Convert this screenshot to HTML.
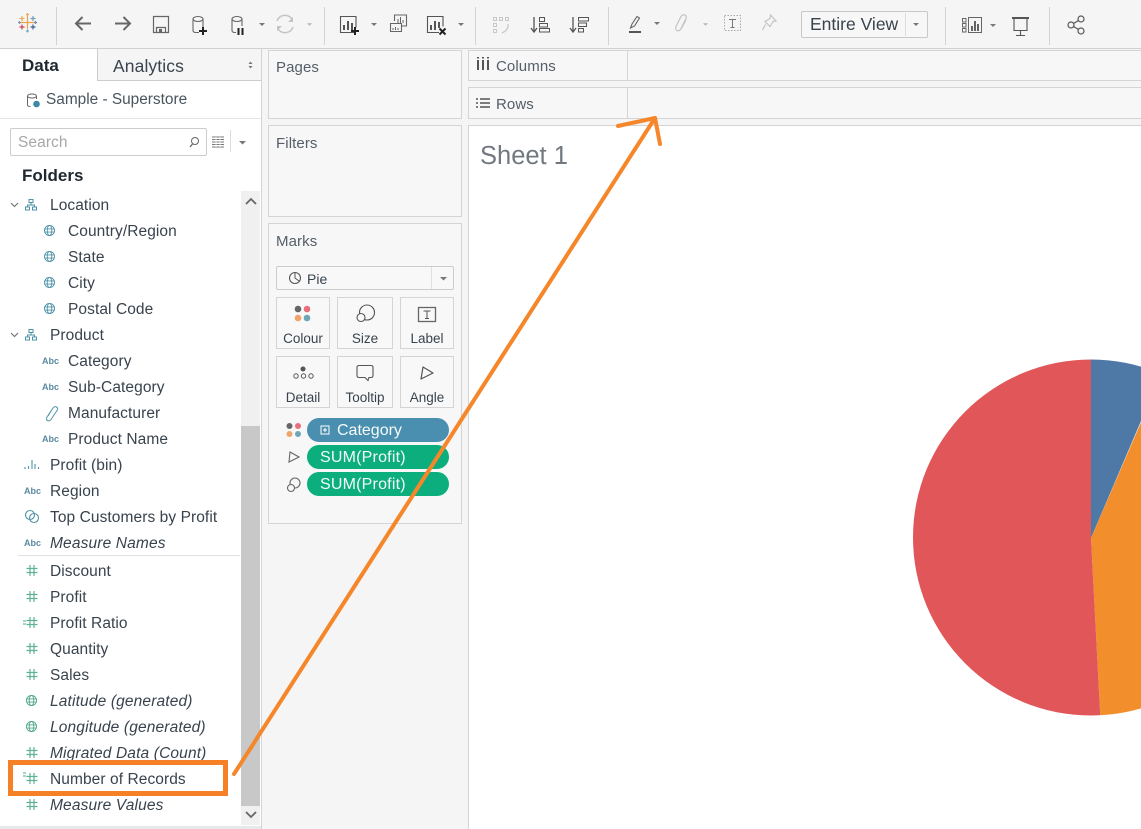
<!DOCTYPE html>
<html><head><meta charset="utf-8"><style>
html,body{margin:0;padding:0;background:#f5f5f5}
#p{position:relative;width:1141px;height:829px;overflow:hidden;background:#f5f5f5;font-family:"Liberation Sans",sans-serif;color:#2f3a45}
#p div{position:absolute;box-sizing:border-box}
.t{font-size:15.5px;line-height:22px;margin-top:1px;white-space:nowrap;color:#39434d;letter-spacing:.08px}
.i{font-style:italic;letter-spacing:.15px}
.box{border:1px solid #d4d4d4;background:#f7f7f7}
.h{font-size:15px;line-height:20px;color:#555e68;white-space:nowrap;letter-spacing:.1px}
.mb{border:1px solid #d4d4d4;background:#f8f8f8;font-size:13.5px;text-align:center;color:#39434d;padding-top:32px;line-height:18px}
.pill{border-radius:12px;color:#f4fbf9;font-size:16px;line-height:25px;white-space:nowrap;letter-spacing:.2px}
svg{position:absolute;left:0;top:0}
</style></head><body><div id="p">
<div style="left:0;top:48px;width:1141px;height:1px;background:#d0d0d0"></div>
<div style="left:0;top:49px;width:261px;height:780px;background:#fff"></div>
<div style="left:261px;top:49px;width:1px;height:780px;background:#d4d4d4"></div>
<div style="left:97px;top:49px;width:164px;height:32px;background:#f5f5f5;border-left:1px solid #ccc;border-bottom:1px solid #ccc"></div>
<div style="left:0;top:118px;width:261px;height:1px;background:#e4e4e4"></div>
<div style="left:10px;top:128px;width:197px;height:28px;border:1px solid #ccc;border-radius:2px;background:#fff"></div>
<div style="left:241px;top:191px;width:19px;height:634px;background:#f0f0f0"></div>
<div style="left:241px;top:426px;width:19px;height:380px;background:#c8c8c8"></div>
<div style="left:18px;top:555px;width:222px;height:1px;background:#e0e0e0"></div>
<div style="left:0;top:826px;width:261px;height:3px;background:#e8e8e8"></div>

<div class="t" style="left:22px;top:54px;font-size:17px;font-weight:bold;color:#1f2830;letter-spacing:0">Data</div>
<div class="t" style="left:113px;top:54px;font-size:17.5px;color:#3a444e;letter-spacing:.1px">Analytics</div>
<div class="t" style="left:46px;top:88px;color:#4a545e;font-size:15.4px;letter-spacing:0">Sample - Superstore</div>
<div class="t" style="left:18px;top:131px;color:#a8a8a8">Search</div>
<div class="t" style="left:22px;top:164px;font-size:17px;font-weight:bold;color:#1f2830;letter-spacing:0">Folders</div>

<div class="t" style="left:50px;top:194px">Location</div>
<div class="t" style="left:68px;top:220px">Country/Region</div>
<div class="t" style="left:68px;top:246px">State</div>
<div class="t" style="left:68px;top:272px">City</div>
<div class="t" style="left:68px;top:298px">Postal Code</div>
<div class="t" style="left:50px;top:324px">Product</div>
<div class="t" style="left:68px;top:350px">Category</div>
<div class="t" style="left:68px;top:376px">Sub-Category</div>
<div class="t" style="left:68px;top:402px">Manufacturer</div>
<div class="t" style="left:68px;top:428px">Product Name</div>
<div class="t" style="left:50px;top:454px">Profit (bin)</div>
<div class="t" style="left:50px;top:480px">Region</div>
<div class="t" style="left:50px;top:506px">Top Customers by Profit</div>
<div class="t i" style="left:50px;top:532px">Measure Names</div>
<div class="t" style="left:50px;top:560px">Discount</div>
<div class="t" style="left:50px;top:586px">Profit</div>
<div class="t" style="left:50px;top:612px">Profit Ratio</div>
<div class="t" style="left:50px;top:638px">Quantity</div>
<div class="t" style="left:50px;top:664px">Sales</div>
<div class="t i" style="left:50px;top:690px">Latitude (generated)</div>
<div class="t i" style="left:50px;top:716px">Longitude (generated)</div>
<div class="t i" style="left:50px;top:742px">Migrated Data (Count)</div>
<div class="t" style="left:50px;top:768px">Number of Records</div>
<div class="t i" style="left:50px;top:794px">Measure Values</div>

<div class="box" style="left:268px;top:50px;width:194px;height:69px"></div>
<div class="box" style="left:268px;top:125px;width:194px;height:92px"></div>
<div class="box" style="left:268px;top:223px;width:194px;height:301px"></div>
<div class="h" style="left:276px;top:58px">Pages</div>
<div class="h" style="left:276px;top:134px">Filters</div>
<div class="h" style="left:276px;top:232px">Marks</div>
<div style="left:276px;top:266px;width:178px;height:24px;border:1px solid #ccc;border-radius:2px;background:#f8f8f8"></div>
<div style="left:431px;top:267px;width:1px;height:22px;background:#e0e0e0"></div>
<div class="t" style="left:307px;top:267px;font-size:14px;letter-spacing:0">Pie</div>
<div class="mb" style="left:276px;top:297px;width:54px;height:52px">Colour</div>
<div class="mb" style="left:337px;top:297px;width:56px;height:52px">Size</div>
<div class="mb" style="left:400px;top:297px;width:54px;height:52px">Label</div>
<div class="mb" style="left:276px;top:356px;width:54px;height:52px">Detail</div>
<div class="mb" style="left:337px;top:356px;width:56px;height:52px">Tooltip</div>
<div class="mb" style="left:400px;top:356px;width:54px;height:52px">Angle</div>
<div class="pill" style="left:307px;top:418px;width:142px;height:24px;background:#4a8fb0;padding-left:30px;letter-spacing:0">Category</div>
<div class="pill" style="left:307px;top:445px;width:142px;height:24px;background:#0bae7c;padding-left:13px">SUM(Profit)</div>
<div class="pill" style="left:307px;top:472px;width:142px;height:24px;background:#0bae7c;padding-left:13px">SUM(Profit)</div>

<div class="box" style="left:468px;top:50px;width:680px;height:31px"></div>
<div class="box" style="left:468px;top:87px;width:680px;height:32px"></div>
<div style="left:627px;top:50px;width:1px;height:31px;background:#d4d4d4"></div>
<div style="left:627px;top:87px;width:1px;height:32px;background:#d4d4d4"></div>
<div class="h" style="left:496px;top:57px">Columns</div>
<div class="h" style="left:496px;top:95px">Rows</div>
<div style="left:468px;top:125px;width:680px;height:710px;background:#fff;border:1px solid #d4d4d4"></div>
<div class="t" style="left:480px;top:140px;font-size:25.500px;line-height:30px;color:#71787f;letter-spacing:0">Sheet 1</div>

<div style="left:801px;top:11px;width:127px;height:27px;border:1px solid #c8c8c8;border-radius:2px;background:#f7f7f7"></div>
<div style="left:905px;top:13px;width:1px;height:23px;background:#ddd"></div>
<div class="t" style="left:810px;top:12px;font-size:17.5px;color:#39434d;letter-spacing:0">Entire View</div>

<svg width="1141" height="829" viewBox="0 0 1141 829" fill="none">
<defs>
<symbol id="g" viewBox="0 0 12 12" overflow="visible"><g stroke="#4f93a8" stroke-width="1" fill="none"><circle cx="6" cy="6" r="5.500"/><ellipse cx="6" cy="6" rx="2.500" ry="5.500"/><path d="M.5 4.300h11M.5 7.700h11"/></g></symbol>
<symbol id="gg" viewBox="0 0 12 12" overflow="visible"><g stroke="#4ea78c" stroke-width="1" fill="none"><circle cx="6" cy="6" r="5.500"/><ellipse cx="6" cy="6" rx="2.500" ry="5.500"/><path d="M.5 4.300h11M.5 7.700h11"/></g></symbol>
<symbol id="n" viewBox="0 0 11 11" overflow="visible"><path d="M3.500 0v11M7.500 0v11M0 3.500h11M0 7.500h11" stroke="#5fb09a" stroke-width="1.200"/></symbol>
<symbol id="h" viewBox="0 0 12 12" overflow="visible"><g stroke="#4f93a8" stroke-width="1" fill="none"><rect x="4" y="0.500" width="4" height="3"/><rect x="0.500" y="8" width="4" height="3"/><rect x="7.500" y="8" width="4" height="3"/><path d="M6 3.500v2.500M2.500 8V6h7v2"/></g></symbol>
<symbol id="c" viewBox="0 0 8 4" overflow="visible"><path d="M0 0h8L4 4z" fill="#777"/></symbol>
<clipPath id="pc"><circle cx="1091" cy="537.500" r="178"/></clipPath>
</defs>

<!-- toolbar dividers -->
<path d="M56.500 7v38M324.500 7v38M475.500 7v38M608.500 7v38M945.500 7v38M1049.500 7v38" stroke="#d2d2d2"/>
<!-- logo -->
<g stroke-width="1.200" opacity=".85">
<path d="M27.500 16v13M21 22.500h13" stroke="#e8962b"/>
<path d="M22 16v5M19.500 18.500h5" stroke="#eba23c"/>
<path d="M33 16v5M30.500 18.500h5" stroke="#5b8fb0"/>
<path d="M22 24.500v5M19.500 27h5" stroke="#c72035"/>
<path d="M33 24.500v5M30.500 27h5" stroke="#1f447a"/>
<path d="M27.500 13v3M26 14.500h3" stroke="#eaa23f"/>
<path d="M27.500 29.500v3M26 31h3" stroke="#5fa2b8"/>
<path d="M18 22.500h3M19.500 21v3" stroke="#7a86a8"/>
<path d="M34 22.500h3M35.500 21v3" stroke="#6a78a0"/>
</g>
<!-- back/forward -->
<path d="M91 23.500H76M82.500 17L76 23.500 82.500 30" stroke="#666" stroke-width="2"/>
<path d="M115 23.500h15M123.500 17L130 23.500 123.500 30" stroke="#666" stroke-width="2"/>
<!-- save -->
<path d="M153.500 16.500h15v16h-15zM156.500 32.500v-5h9v5" stroke="#666" stroke-width="1.200"/><rect x="159" y="29" width="3" height="3.500" fill="#666"/>
<!-- add data -->
<g stroke="#666" stroke-width="1.100"><ellipse cx="198" cy="19" rx="5" ry="2.500"/><path d="M193 19v11.500q0 2 3 2h3M203 19v8"/></g>
<path d="M203 27v8M199 31h8" stroke="#222" stroke-width="2"/>
<!-- pause -->
<g stroke="#666" stroke-width="1.100"><ellipse cx="237" cy="19" rx="5" ry="2.500"/><path d="M232 19v11.500q0 2 3 2h1M242 19v7"/></g>
<path d="M238.500 28v7M242.500 28v7" stroke="#222" stroke-width="2"/>
<use href="#c" x="259" y="23" width="6" height="3"/>
<!-- refresh -->
<path d="M277 21a8.500 8.500 0 0 1 15-2M293 27a8.500 8.500 0 0 1-15 2" stroke="#c4c4c4" stroke-width="1.500"/><path d="M293 17v5h-5zM277 31v-5h5z" fill="#c4c4c4"/>
<use href="#c" x="307" y="23" width="5" height="3" opacity=".5"/>
<!-- new sheet -->
<path d="M354 32.500h-13.500v-16h15.500v11" stroke="#555" stroke-width="1.100"/>
<path d="M344 30v-5M348 30v-9M352 30v-7" stroke="#555" stroke-width="2"/>
<path d="M355 27v8M351 31h8" stroke="#222" stroke-width="2"/>
<use href="#c" x="371" y="23" width="6" height="3"/>
<!-- dup -->
<path d="M394.500 21v-6h12v11h-5M390.500 23.500h11v8h-11z" stroke="#666" stroke-width="1.100"/><path d="M398 23v-4M400.500 23v-6M403 23v-3M393 30v-2M395.500 30v-3M398 30v-2" stroke="#666"/>
<!-- clear -->
<path d="M439 32.500h-11.500v-16h15.500v10" stroke="#555" stroke-width="1.100"/>
<path d="M431 30v-5M435 30v-9M439 28v-6" stroke="#555" stroke-width="2"/>
<path d="M439.500 28.500l6 6M445.500 28.500l-6 6" stroke="#222" stroke-width="2"/>
<use href="#c" x="458" y="23" width="6" height="3"/>
<!-- swap -->
<g stroke="#c8c8c8"><path d="M493.500 17.500h3v3h-3zM499.500 17.500h3v3h-3zM505.500 17.500h3v3h-3zM493.500 23.500h3v3h-3zM493.500 29.500h3v3h-3z"/><path d="M508 24q1 6-6 9" stroke-width="1.300"/></g>
<!-- sort asc -->
<path d="M534 17v14M531 28l3 4 3-4" stroke="#555" stroke-width="1.300"/><path d="M539.500 17.500h5v4h-5zM539.500 23.500h8v3.500h-8zM539.500 28.500h10v3.500h-10z" stroke="#555"/>
<!-- sort desc -->
<path d="M573 17v14M570 28l3 4 3-4" stroke="#555" stroke-width="1.300"/><path d="M578.500 17.500h10v3.500h-10zM578.500 23h8v3.500h-8zM578.500 28.500h5v3.500h-5z" stroke="#555"/>
<!-- highlight -->
<path d="M630.500 28l1.500-4 5-7.500 2.500 1.500-5 8z" stroke="#666" stroke-width="1.100"/><rect x="629" y="31" width="12" height="2" fill="#555"/>
<use href="#c" x="654" y="22" width="6" height="3"/>
<!-- clip -->
<path d="M686 20l-5 9q-2 2.500-4 1.500t-1-4l5-10q2-2.500 4-1.500t1 3.500l-5 10" stroke="#c4c4c4" stroke-width="1.200"/>
<use href="#c" x="703" y="23" width="5" height="3" opacity=".5"/>
<!-- text box -->
<rect x="724.500" y="15.500" width="16" height="15" stroke="#aaa" stroke-dasharray="1.500 1.500"/><path d="M729 19.500h7M732.500 19.500v8M730.500 27.500h4" stroke="#777"/>
<!-- pin -->
<path d="M770.500 15l5.500 6-3 .5-3 5-5-5 5-3zM765.500 24.500l-3 5.500" stroke="#c4c4c4" stroke-width="1.200"/>
<use href="#c" x="913" y="23" width="6" height="3"/>
<!-- show me -->
<path d="M962.500 18.500h3.500v3.500h-3.500zM962.500 23.500h3.500v3.500h-3.500zM962.500 28.500h3.500v3.500h-3.500zM968.500 17.500h13v15h-13z" stroke="#666"/><path d="M972 31v-5M975 31v-10M978 31v-7" stroke="#555" stroke-width="1.800"/>
<use href="#c" x="990" y="24" width="6" height="3"/>
<!-- present -->
<path d="M1012 18h17" stroke="#555" stroke-width="2"/><path d="M1014 18v12.500h13V18M1020.500 30.500v5M1016 35.500h9" stroke="#555" stroke-width="1.100"/>
<!-- share -->
<g stroke="#555" stroke-width="1.200"><circle cx="1081" cy="19" r="3"/><circle cx="1071" cy="25" r="3"/><circle cx="1081" cy="31" r="3"/><path d="M1078.500 20.500l-5 3M1073.500 26.500l5 3"/></g>

<!-- sidebar top icons -->
<path d="M248.500 64l2-2.500 2 2.500zM248.500 66l2 2.500 2-2.500z" fill="#777"/>
<g stroke="#666" stroke-width="1"><ellipse cx="32" cy="96" rx="4.500" ry="2"/><path d="M27.500 96v9q0 1.500 3 1.500M36.500 96v3"/></g><circle cx="36.500" cy="104" r="3.300" fill="#3c88a8"/>
<circle cx="195" cy="141" r="3.500" stroke="#666"/><path d="M192.500 144l-2.500 3" stroke="#666" stroke-width="1.300"/>
<path d="M212 137h12M212 139.500h12M212 142h12M212 144.500h12M212 147h12" stroke="#777"/><path d="M216 137v10M220 137v10" stroke="#fff" stroke-width=".8"/>
<path d="M230.500 130v22" stroke="#ddd"/>
<use href="#c" x="239" y="141" width="7" height="3.500"/>
<path d="M246 204l5-5 5 5M246 812l5 5 5-5" stroke="#666" stroke-width="1.800"/>

<!-- row icons -->
<path d="M11 203l3.500 3.500 3.500-3.500M11 333l3.500 3.500 3.500-3.500" stroke="#777" stroke-width="1.200"/>
<use href="#h" x="25" y="199" width="12" height="12"/>
<use href="#h" x="25" y="329" width="12" height="12"/>
<use href="#g" x="44" y="225" width="11" height="11"/>
<use href="#g" x="44" y="251" width="11" height="11"/>
<use href="#g" x="44" y="277" width="11" height="11"/>
<use href="#g" x="44" y="303" width="11" height="11"/>
<g font-family="Liberation Sans,sans-serif" font-size="9" font-weight="bold" fill="#5a8aa0">
<text x="42" y="364">Abc</text><text x="42" y="390">Abc</text><text x="42" y="442">Abc</text>
<text x="24" y="494">Abc</text><text x="24" y="546">Abc</text></g>
<path d="M53 408l-6 9q-1.500 2.500 0.500 3.500t3.500-1l6-9q1.500-2.500-.5-3.500t-3.500 1l-5 8" stroke="#4f93a8"/>
<path d="M25 467v2M28.500 466v3M32 460v9M35 464v5M38.500 467v2" stroke="#4f93a8" stroke-width="1.100"/>
<circle cx="30" cy="515" r="4.500" stroke="#4f93a8" stroke-width="1.100"/><circle cx="34" cy="518" r="4.500" stroke="#4f93a8" stroke-width="1.100"/>
<use href="#n" x="26.500" y="565" width="11" height="11"/>
<use href="#n" x="26.500" y="591" width="11" height="11"/>
<use href="#n" x="26.500" y="617" width="11" height="11"/><path d="M23 621h3M23 624h3M23 773h3M23 776h3" stroke="#4ea78c"/>
<use href="#n" x="26.500" y="643" width="11" height="11"/>
<use href="#n" x="26.500" y="669" width="11" height="11"/>
<use href="#gg" x="26" y="695" width="11" height="11"/>
<use href="#gg" x="26" y="721" width="11" height="11"/>
<use href="#n" x="26.500" y="747" width="11" height="11"/>
<use href="#n" x="26.500" y="773" width="11" height="11"/>
<use href="#n" x="26.500" y="799" width="11" height="11"/>

<!-- shelf icons -->
<path d="M478 60v10M483 60v10M488 60v10" stroke="#555" stroke-width="2"/><path d="M478 57v1.500M483 57v1.500M488 57v1.500" stroke="#555" stroke-width="2"/>
<path d="M480 99h10M480 103h10M480 107h10" stroke="#555" stroke-width="1.600"/><path d="M476 99h2M476 103h2M476 107h2" stroke="#555" stroke-width="1.600"/>

<!-- marks -->
<circle cx="295" cy="278" r="5.500" stroke="#555" stroke-width="1.100"/><path d="M295 272.500V278l4 3" stroke="#555"/>
<use href="#c" x="440" y="277" width="7" height="3.500"/>
<circle cx="298" cy="309" r="3.300" fill="#666"/><circle cx="307" cy="309" r="3.300" fill="#e8707c"/><circle cx="298" cy="318" r="3.300" fill="#f0a46c"/><circle cx="307" cy="318" r="3.300" fill="#6ea7b5"/>
<circle cx="367" cy="312.500" r="7.500" stroke="#555" stroke-width="1.100" fill="#f8f8f8"/><circle cx="361" cy="317.500" r="4" stroke="#555" stroke-width="1.100" fill="#f8f8f8"/>
<rect x="418.500" y="307.500" width="17" height="14" stroke="#666" stroke-width="1.300"/><path d="M423.500 311h7M427 311v7.500M425 318.500h4" stroke="#555"/>
<circle cx="303" cy="369" r="2.500" fill="#555"/><circle cx="296" cy="376" r="2.200" stroke="#555"/><circle cx="303.500" cy="376" r="2.200" stroke="#555"/><circle cx="311" cy="376" r="2.200" stroke="#555"/>
<path d="M359 365.500h12q2 0 2 2v8q0 2-2 2h-2l-1 3-3-3h-6q-2 0-2-2v-8q0-2 2-2z" stroke="#555" stroke-width="1.100"/>
<path d="M423 367l10 6-12 6z" stroke="#555" stroke-width="1.200" stroke-linejoin="round"/>
<circle cx="289.500" cy="426" r="3" fill="#666"/><circle cx="298" cy="426" r="3" fill="#e8707c"/><circle cx="289.500" cy="434" r="3" fill="#f0a46c"/><circle cx="298" cy="434" r="3" fill="#6ea7b5"/>
<path d="M290 452l9 5-10 5z" stroke="#666" stroke-width="1.100"/>
<circle cx="295" cy="483" r="5" stroke="#666" stroke-width="1.100"/><circle cx="291" cy="488" r="3.500" stroke="#666" stroke-width="1.100" fill="#f7f7f7"/>
<rect x="321" y="426" width="8" height="8" stroke="#fff"/><path d="M323 430h4M325 428v4" stroke="#fff"/>

<!-- pie -->
<g clip-path="url(#pc)">
<path d="M1091 538V350H1150V400z" fill="#4e79a7"/>
<path d="M1091 538L1142 420L1150 410V730H1101z" fill="#f28e2b"/>
<path d="M1091 538V350H900V730H1101z" fill="#e15759"/>
</g>

<!-- annotations -->
<rect x="10.500" y="762.500" width="215" height="31" stroke="#f58025" stroke-width="5"/>
<path d="M234 774L655 118" stroke="#f5862a" stroke-width="4" stroke-linecap="round"/>
<path d="M618 126L655 118L660 144" stroke="#f5862a" stroke-width="4" stroke-linecap="round" stroke-linejoin="round"/>
</svg>
</div></body></html>
